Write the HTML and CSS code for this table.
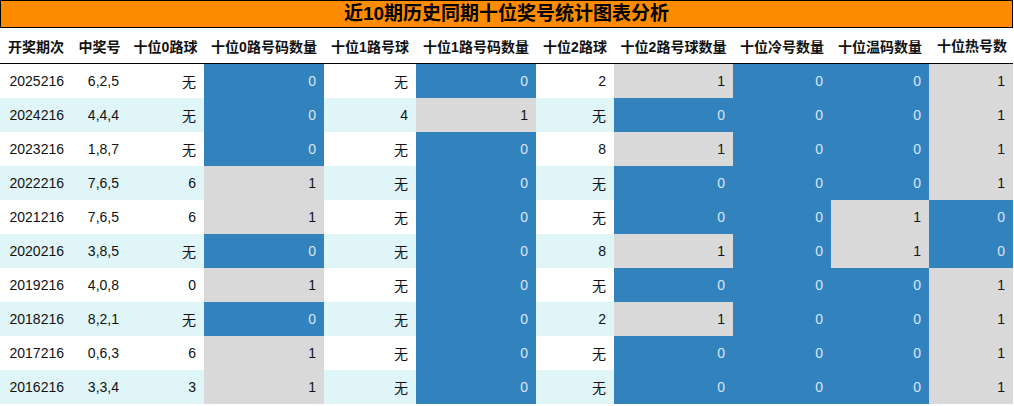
FILE: index.html
```html
<!DOCTYPE html>
<html lang="zh">
<head>
<meta charset="utf-8">
<link rel="stylesheet" href="styles.css">
</head>
<body>
<div class="wrap">
  <div class="title">近10期历史同期十位奖号统计图表分析</div>
  <table class="grid">
    <colgroup>
      <col class="w72"><col class="w55"><col class="w77"><col class="w120"><col class="w92"><col class="w120"><col class="w78"><col class="w119"><col class="w98"><col class="w98"><col class="w84">
    </colgroup>
    <thead>
      <tr>
        <th>开奖期次</th><th>中奖号</th><th>十位0路球</th><th>十位0路号码数量</th><th>十位1路号球</th><th>十位1路号码数量</th><th>十位2路球</th><th>十位2路号球数量</th><th>十位冷号数量</th><th>十位温码数量</th><th class="clip"><div>十位热号数量</div></th>
      </tr>
    </thead>
    <tbody>
      <tr><td>2025216</td><td>6,2,5</td><td>无</td><td class="b">0</td><td>无</td><td class="b">0</td><td>2</td><td class="g">1</td><td class="b">0</td><td class="b">0</td><td class="g">1</td></tr>
      <tr><td>2024216</td><td>4,4,4</td><td>无</td><td class="b">0</td><td>4</td><td class="g">1</td><td>无</td><td class="b">0</td><td class="b">0</td><td class="b">0</td><td class="g">1</td></tr>
      <tr><td>2023216</td><td>1,8,7</td><td>无</td><td class="b">0</td><td>无</td><td class="b">0</td><td>8</td><td class="g">1</td><td class="b">0</td><td class="b">0</td><td class="g">1</td></tr>
      <tr><td>2022216</td><td>7,6,5</td><td>6</td><td class="g">1</td><td>无</td><td class="b">0</td><td>无</td><td class="b">0</td><td class="b">0</td><td class="b">0</td><td class="g">1</td></tr>
      <tr><td>2021216</td><td>7,6,5</td><td>6</td><td class="g">1</td><td>无</td><td class="b">0</td><td>无</td><td class="b">0</td><td class="b">0</td><td class="g">1</td><td class="b">0</td></tr>
      <tr><td>2020216</td><td>3,8,5</td><td>无</td><td class="b">0</td><td>无</td><td class="b">0</td><td>8</td><td class="g">1</td><td class="b">0</td><td class="g">1</td><td class="b">0</td></tr>
      <tr><td>2019216</td><td>4,0,8</td><td>0</td><td class="g">1</td><td>无</td><td class="b">0</td><td>无</td><td class="b">0</td><td class="b">0</td><td class="b">0</td><td class="g">1</td></tr>
      <tr><td>2018216</td><td>8,2,1</td><td>无</td><td class="b">0</td><td>无</td><td class="b">0</td><td>2</td><td class="g">1</td><td class="b">0</td><td class="b">0</td><td class="g">1</td></tr>
      <tr><td>2017216</td><td>0,6,3</td><td>6</td><td class="g">1</td><td>无</td><td class="b">0</td><td>无</td><td class="b">0</td><td class="b">0</td><td class="b">0</td><td class="g">1</td></tr>
      <tr><td>2016216</td><td>3,3,4</td><td>3</td><td class="g">1</td><td>无</td><td class="b">0</td><td>无</td><td class="b">0</td><td class="b">0</td><td class="b">0</td><td class="g">1</td></tr>
    </tbody>
  </table>
</div>
</body>
</html>
```

FILE: styles.css
```css
html, body {
  margin: 0;
  padding: 0;
  background: #ffffff;
}

.wrap {
  width: 1013px;
  font-family: "Liberation Sans", "Noto Sans CJK SC", sans-serif;
  color: #111111;
}

.title {
  height: 26px;
  line-height: 26px;
  background: #ff8c00;
  border: 1px solid #000000;
  text-align: center;
  font-size: 19px;
  font-weight: bold;
  color: #000000;
}

.grid {
  width: 1013px;
  table-layout: fixed;
  border-collapse: collapse;
  font-size: 14px;
}

.w72 { width: 72px; }
.w55 { width: 55px; }
.w77 { width: 77px; }
.w120 { width: 120px; }
.w92 { width: 92px; }
.w78 { width: 78px; }
.w119 { width: 119px; }
.w98 { width: 98px; }
.w84 { width: 84px; }

.grid th {
  height: 35px;
  padding: 0;
  font-weight: bold;
  text-align: center;
  white-space: nowrap;
  border-bottom: 1px solid #000000;
  color: #111111;
}

.grid th.clip div {
  height: 20px;
  line-height: 20px;
  overflow: hidden;
  white-space: normal;
  text-align: left;
  padding-left: 8px;
}

.grid td {
  height: 34px;
  padding: 0 8px 0 0;
  text-align: right;
  white-space: nowrap;
  color: #111111;
}

.grid tbody tr:nth-child(even) td {
  background: #dff5f7;
}

.grid tbody tr td.b {
  background: #3282bd;
  color: #d9e6f2;
}

.grid tbody tr td.g {
  background: #d9d9d9;
  color: #111111;
}
```
